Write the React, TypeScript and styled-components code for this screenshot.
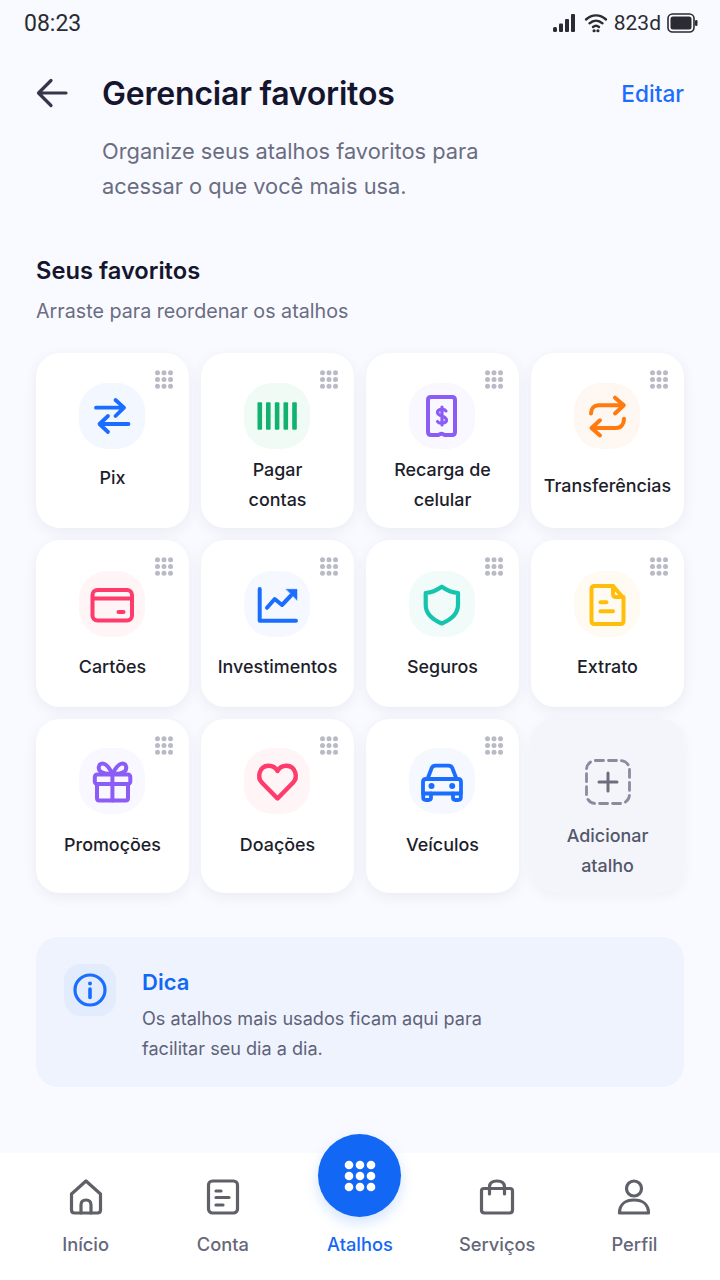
import React from "react";
import styled, { createGlobalStyle } from "styled-components";

const Global = createGlobalStyle`
  html, body { margin: 0; padding: 0; background: #f9faff; }
  * { box-sizing: border-box; }
  body { font-family: Inter, "Noto Sans", "Liberation Sans", sans-serif; }
`;

const Page = styled.div`
  width: 720px;
  height: 1280px;
  display: flex;
  flex-direction: column;
  background: #f9faff;
  overflow: hidden;
`;

const StatusBar = styled.div`
  height: 46px;
  padding: 0 22px 0 24px;
  display: flex;
  align-items: center;
  justify-content: space-between;
  color: #2a2b33;
  font-family: Roboto, Inter, sans-serif;
  font-size: 21px;
`;
const StatusTime = styled.span`
  font-size: 23px;
`;
const StatusRight = styled.div`
  display: flex;
  align-items: center;
  gap: 6px;
`;
const Header = styled.header`
  margin-top: 27px;
  padding: 0 36px;
  display: flex;
  align-items: center;
  height: 40px;
`;
const BackSlot = styled.div`
  width: 66px;
  display: flex;
  align-items: center;
`;
const Title = styled.h1`
  flex: 1;
  margin: 0;
  font-size: 32px;
  font-weight: 600;
  color: #15162e;
  letter-spacing: -0.2px;
`;
const EditLink = styled.span`
  font-size: 22.6px;
  font-weight: 500;
  color: #1a6dff;
`;
const Description = styled.p`
  margin: 21px 0 0 102px;
  width: 420px;
  font-size: 21.8px;
  line-height: 35px;
  color: #6a6d82;
`;
const Section = styled.section`
  margin-top: 51px;
  padding: 0 36px;
`;
const SectionTitle = styled.h2`
  margin: 0;
  font-size: 23.7px;
  line-height: 32px;
  font-weight: 600;
  color: #15162e;
`;
const SectionHint = styled.p`
  margin: 10px 0 0;
  font-size: 19.7px;
  line-height: 28px;
  color: #6a6d82;
`;
const Grid = styled.div`
  margin-top: 28px;
  display: grid;
  grid-template-columns: repeat(4, 153px);
  grid-template-rows: 175px 167px 174px;
  gap: 12px;
`;
const Card = styled.div<{ $pad: number }>`
  position: relative;
  display: flex;
  flex-direction: column;
  align-items: center;
  padding-top: ${(p) => p.$pad}px;
  background: #ffffff;
  border-radius: 24px;
  box-shadow: 0 4px 14px rgba(40, 50, 100, 0.07);
`;
const AddCard = styled(Card)`
  background: #f3f5fb;
  box-shadow: 0 3px 12px rgba(40, 50, 100, 0.05);
`;
const Grip = styled.svg`
  position: absolute;
  top: 17px;
  right: 16px;
`;
const Tile = styled.div<{ $bg: string }>`
  width: 66px;
  height: 66px;
  margin-right: 1px;
  border-radius: 28px;
  background: ${(p) => p.$bg};
  flex: none;
`;
const CardLabel = styled.div<{ $gap: number; $muted?: boolean }>`
  margin-top: ${(p) => p.$gap}px;
  font-size: 17.9px;
  line-height: 29.5px;
  font-weight: 500;
  text-align: center;
  color: ${(p) => (p.$muted ? "#54576b" : "#1d1e2c")};
`;
const Tip = styled.div`
  margin: 44px 36px 0;
  height: 150px;
  padding: 27px 28px;
  display: flex;
  gap: 26px;
  border-radius: 22px;
  background: #eef3fe;
`;
const TipIcon = styled.div`
  width: 52px;
  height: 52px;
  flex: none;
  border-radius: 17px;
  background: #e2ecfd;
  display: flex;
  align-items: center;
  justify-content: center;
`;
const TipTitle = styled.div`
  font-size: 22px;
  line-height: 36px;
  font-weight: 600;
  color: #1268f5;
`;
const TipText = styled.p`
  margin: 3px 0 0;
  width: 380px;
  font-size: 18.1px;
  line-height: 30px;
  color: #5e6278;
`;
const Nav = styled.nav`
  position: relative;
  margin-top: auto;
  height: 127px;
  padding: 26px 17px 0;
  display: grid;
  grid-template-columns: repeat(5, 1fr);
  background: #ffffff;
`;
const NavItem = styled.div<{ $active?: boolean }>`
  display: flex;
  flex-direction: column;
  align-items: center;
  font-size: 18.3px;
  line-height: 28px;
  font-weight: 500;
  color: ${(p) => (p.$active ? "#1268f5" : "#65677a")};
`;
const NavIconSlot = styled.div`
  height: 34px;
  margin-bottom: 17px;
`;
const Fab = styled.div`
  position: absolute;
  left: 318px;
  top: -19px;
  width: 83px;
  height: 83px;
  border-radius: 50%;
  background: #1268f5;
  box-shadow: 0 6px 14px rgba(18, 104, 245, 0.18);
  display: flex;
  align-items: center;
  justify-content: center;
`;

const BLUE = "#1a6dff";
const PURPLE = "#8b5cf6";
const ORANGE = "#ff7a0f";
const RED = "#ff3b6b";
const TEAL = "#14c4ad";
const YELLOW = "#ffbe0b";

const Ico = ({ c, w = 4, children }: { c: string; w?: number; children: React.ReactNode }) => (
  <svg width="66" height="66" viewBox="0 0 66 66" fill="none" stroke={c} strokeWidth={w} strokeLinecap="round" strokeLinejoin="round">
    {children}
  </svg>
);

const icons: Record<string, React.ReactNode> = {
  pix: (
    <Ico c={BLUE} w={3.8}>
      <path d="M17 24.7H45M36.5 17L45 24.7L36.5 33" />
      <path d="M49.5 41H21M29 33L20.5 41L29 49" />
    </Ico>
  ),
  bars: (
    <Ico c="#0fb26e" w={0}>
      <g fill="#0fb26e" stroke="none">
        <rect x="13.5" y="19.3" width="4.6" height="27.4" rx="1" />
        <rect x="22" y="19.3" width="4.6" height="27.4" rx="1" />
        <rect x="30.8" y="19.3" width="4.6" height="27.4" rx="1" />
        <rect x="39.5" y="19.3" width="4.6" height="27.4" rx="1" />
        <rect x="48.2" y="19.3" width="4.6" height="27.4" rx="1" />
      </g>
    </Ico>
  ),
  phone: (
    <Ico c={PURPLE}>
      <path d="M22 14H43Q46 14 46 17V49Q46 52 43 52H35.5Q32.5 49.5 29.5 52H22Q19 52 19 49V17Q19 14 22 14Z" />
      <path d="M37 28C35.5 25.7 28.5 25.5 28.5 29.5C28.5 33.5 37.5 32.5 37.5 37C37.5 41 30 41 28.5 38.5M33 24V42" strokeWidth="3.2" />
    </Ico>
  ),
  transfer: (
    <Ico c={ORANGE} w={4}>
      <path d="M17 30.5C17 25.5 20 22.3 24.5 22.3H49.5M41 14.7L49.8 22.3L41 30.5" />
      <path d="M50 35.7C50 41.5 47 45 42 45H18M26 37.3L17.5 45L26 52.5" />
    </Ico>
  ),
  card: (
    <Ico c={RED}>
      <rect x="13.5" y="19" width="39.5" height="30.5" rx="5" />
      <path d="M14 27.5H53" />
      <path d="M39.5 41H44.5" />
    </Ico>
  ),
  chart: (
    <Ico c={BLUE}>
      <path d="M15.7 18V49.7H52" />
      <path d="M23 36.8L30.7 28L38 34L47 24.5" />
      <path d="M42.3 18.3H53V29Z" fill={BLUE} strokeWidth="0.5" />
    </Ico>
  ),
  shield: (
    <Ico c={TEAL} w={4.2}>
      <path d="M32.8 15.7C37.5 19 43 21.5 49 22V34C49 43 41 49 32.8 52.5C24.5 49 16.7 43 16.7 34V22C22.5 21.5 28 19 32.8 15.7Z" />
    </Ico>
  ),
  doc: (
    <Ico c={YELLOW} w={4}>
      <path d="M20.5 15H39L49.5 27V50Q49.5 53 46.5 53H20.5Q17.5 53 17.5 50V18Q17.5 15 20.5 15Z" />
      <path d="M39 15V23Q39 26 42 26H49.5" />
      <path d="M26.5 31.3H32.5M26.5 40.3H39" />
    </Ico>
  ),
  gift: (
    <Ico c={PURPLE} w={4}>
      <rect x="15.8" y="26.5" width="35.5" height="9.5" rx="2.5" />
      <path d="M18 36V50Q18 52.5 20.5 52.5H46.5Q49 52.5 49 50V36" />
      <path d="M33.4 26.5V52.5" />
      <path d="M33.4 26C30 19 27 15.5 23.5 15.5C19.5 15.5 18.5 21 21.5 23.5C23.5 25.3 28 26 33.4 26Z" />
      <path d="M33.4 26C37 19 40 15.5 43.5 15.5C47.5 15.5 48.5 21 45.5 23.5C43.5 25.3 39 26 33.4 26Z" />
    </Ico>
  ),
  heart: (
    <Ico c={RED} w={4.4}>
      <path d="M33.5 50.5L17.8 34.5C13 29.5 15 18 24.5 17.7C28.5 17.6 31.8 20 33.5 23C35.2 20 38.5 17.6 42.5 17.7C52 18 54 29.5 49.2 34.5Z" />
    </Ico>
  ),
  car: (
    <Ico c={BLUE} w={3.8}>
      <path d="M18.5 31L22.5 20.5Q23.5 17.6 26.5 17.6H39.5Q42.5 17.6 43.5 20.5L47.5 31" />
      <path d="M14 34Q14 31 17 31H49Q52 31 52 34V45.5H14Z" />
      <path d="M14.2 45.5V49.5Q14.2 52 17 52H19.5Q22 52 22 49.5V45.5M44 45.5V49.5Q44 52 46.5 52H49Q51.8 52 51.8 49.5V45.5" />
      <circle cx="22.5" cy="38" r="3" fill={BLUE} stroke="none" />
      <circle cx="43.2" cy="38" r="3" fill={BLUE} stroke="none" />
    </Ico>
  ),
};

type Item = { k: string; bg: string; lines: string[]; gap: number };
const items: Item[][] = [
  [
    { k: "pix", bg: "#f3f7ff", lines: ["Pix"], gap: 14 },
    { k: "bars", bg: "#f0fbf5", lines: ["Pagar", "contas"], gap: 6 },
    { k: "phone", bg: "#f9f7ff", lines: ["Recarga de", "celular"], gap: 6 },
    { k: "transfer", bg: "#fff7f1", lines: ["Transferências"], gap: 22 },
  ],
  [
    { k: "card", bg: "#fff4f6", lines: ["Cartões"], gap: 15 },
    { k: "chart", bg: "#f5f8ff", lines: ["Investimentos"], gap: 15 },
    { k: "shield", bg: "#f1fbfa", lines: ["Seguros"], gap: 15 },
    { k: "doc", bg: "#fffbf3", lines: ["Extrato"], gap: 15 },
  ],
  [
    { k: "gift", bg: "#f9f7ff", lines: ["Promoções"], gap: 16 },
    { k: "heart", bg: "#fff4f6", lines: ["Doações"], gap: 16 },
    { k: "car", bg: "#f5f8ff", lines: ["Veículos"], gap: 16 },
  ],
];
const rowPad = [30, 31, 29];

const GripDots = () => (
  <Grip width="18" height="19" viewBox="0 0 18 19" fill="#b9bac6">
    {[2.8, 9.5, 16.2].flatMap((y) =>
      [2.5, 9, 15.5].map((x) => <circle key={`${x}-${y}`} cx={x} cy={y} r="2.5" />)
    )}
  </Grip>
);

const navIcon = { fill: "none", stroke: "#5f6068", strokeWidth: 3.2, strokeLinecap: "round", strokeLinejoin: "round" } as const;

export default function App() {
  return (
    <Page>
      <Global />
      <StatusBar>
        <StatusTime>08:23</StatusTime>
        <StatusRight>
          <svg width="26" height="20" viewBox="0 0 26 20" fill="#2a2b33">
            <rect x="1" y="14" width="4" height="5" rx="1.5" />
            <rect x="7" y="10.5" width="4" height="8.5" rx="1" />
            <rect x="13" y="6" width="4" height="13" rx="1" />
            <rect x="19" y="1" width="4" height="18" rx="1" />
          </svg>
          <svg width="24" height="20" viewBox="0 0 24 20" fill="none" stroke="#2a2b33" strokeWidth="2.4" strokeLinecap="round">
            <path d="M2 6.5C8 1 16 1 22 6.5" />
            <path d="M5.5 10.3C9.5 6.7 14.5 6.7 18.5 10.3" />
            <path d="M9 14C11 12.4 13 12.4 15 14" />
            <path d="M10 17.8H10.2M13.8 17.8H14" strokeWidth="3" />
          </svg>
          <span>823d</span>
          <svg width="31" height="20" viewBox="0 0 31 20">
            <rect x="1" y="1" width="26" height="18" rx="4.5" fill="none" stroke="#2a2b33" strokeWidth="1.6" />
            <rect x="3.5" y="3.5" width="21" height="13" rx="2.5" fill="#2a2b33" />
            <rect x="28" y="7" width="2.5" height="6" rx="1.2" fill="#2a2b33" />
          </svg>
        </StatusRight>
      </StatusBar>
      <Header>
        <BackSlot>
          <svg width="32" height="30" viewBox="0 0 32 30" fill="none" stroke="#35364a" strokeWidth="3.2" strokeLinecap="round" strokeLinejoin="round">
            <path d="M30 15H3M15 2.5L2.5 15L15 27.5" />
          </svg>
        </BackSlot>
        <Title>Gerenciar favoritos</Title>
        <EditLink>Editar</EditLink>
      </Header>
      <Description>Organize seus atalhos favoritos para acessar o que você mais usa.</Description>
      <Section>
        <SectionTitle>Seus favoritos</SectionTitle>
        <SectionHint>Arraste para reordenar os atalhos</SectionHint>
        <Grid>
          {items.map((row, r) =>
            row.map((it) => (
              <Card key={it.k} $pad={rowPad[r]}>
                <GripDots />
                <Tile $bg={it.bg}>{icons[it.k]}</Tile>
                <CardLabel $gap={it.gap}>
                  {it.lines.map((l) => (
                    <div key={l}>{l}</div>
                  ))}
                </CardLabel>
              </Card>
            ))
          )}
          <AddCard $pad={40}>
            <svg width="46" height="46" viewBox="0 0 46 46" fill="none" stroke="#8a8b9e" strokeWidth="2.8" strokeLinecap="round">
              <rect x="1.5" y="1.5" width="43" height="43" rx="9" strokeDasharray="8 5" />
              <path d="M14 23H32M23 14V32" stroke="#6c6e80" strokeWidth="3" />
            </svg>
            <CardLabel $gap={16} $muted>
              <div>Adicionar</div>
              <div>atalho</div>
            </CardLabel>
          </AddCard>
        </Grid>
      </Section>
      <Tip>
        <TipIcon>
          <svg width="34" height="34" viewBox="0 0 34 34" fill="none" stroke={BLUE} strokeWidth="3.2" strokeLinecap="round">
            <circle cx="17" cy="17" r="15" />
            <path d="M17 16V24.5" strokeWidth="3.6" />
            <circle cx="17" cy="10.5" r="2" fill={BLUE} stroke="none" />
          </svg>
        </TipIcon>
        <div>
          <TipTitle>Dica</TipTitle>
          <TipText>Os atalhos mais usados ficam aqui para facilitar seu dia a dia.</TipText>
        </div>
      </Tip>
      <Nav>
        <NavItem>
          <NavIconSlot>
            <svg width="34" height="36" viewBox="0 0 34 36" {...navIcon}>
              <path d="M17 2L31.5 15V31Q31.5 34 28.5 34H5.5Q2.5 34 2.5 31V15Z" />
              <path d="M12 34V26Q12 21 17 21Q22 21 22 26V34" />
            </svg>
          </NavIconSlot>
          Início
        </NavItem>
        <NavItem>
          <NavIconSlot>
            <svg width="34" height="36" viewBox="0 0 34 36" {...navIcon}>
              <rect x="2.5" y="2" width="29" height="32" rx="4" />
              <path d="M10 12H15M10 18.5H23M10 26H17" />
            </svg>
          </NavIconSlot>
          Conta
        </NavItem>
        <NavItem $active>
          <Fab>
            <svg width="32" height="32" viewBox="0 0 32 32" fill="#ffffff">
              {[5, 16, 27].flatMap((y) => [5, 16, 27].map((x) => <circle key={`${x}-${y}`} cx={x} cy={y} r="4.3" />))}
            </svg>
          </Fab>
          <NavIconSlot />
          Atalhos
        </NavItem>
        <NavItem>
          <NavIconSlot>
            <svg width="36" height="36" viewBox="0 0 36 36" {...navIcon}>
              <path d="M5 9.5H31Q33.5 9.5 33.5 12V31Q33.5 34 30.5 34H5.5Q2.5 34 2.5 31V12Q2.5 9.5 5 9.5Z" />
              <path d="M10.5 15V8Q10.5 2 18 2Q25.5 2 25.5 8V15" />
            </svg>
          </NavIconSlot>
          Serviços
        </NavItem>
        <NavItem>
          <NavIconSlot>
            <svg width="34" height="36" viewBox="0 0 34 36" {...navIcon}>
              <circle cx="17" cy="9.5" r="7.5" />
              <path d="M2.5 34C2.5 25 9 21 17 21C25 21 31.5 25 31.5 34Z" />
            </svg>
          </NavIconSlot>
          Perfil
        </NavItem>
      </Nav>
    </Page>
  );
}
